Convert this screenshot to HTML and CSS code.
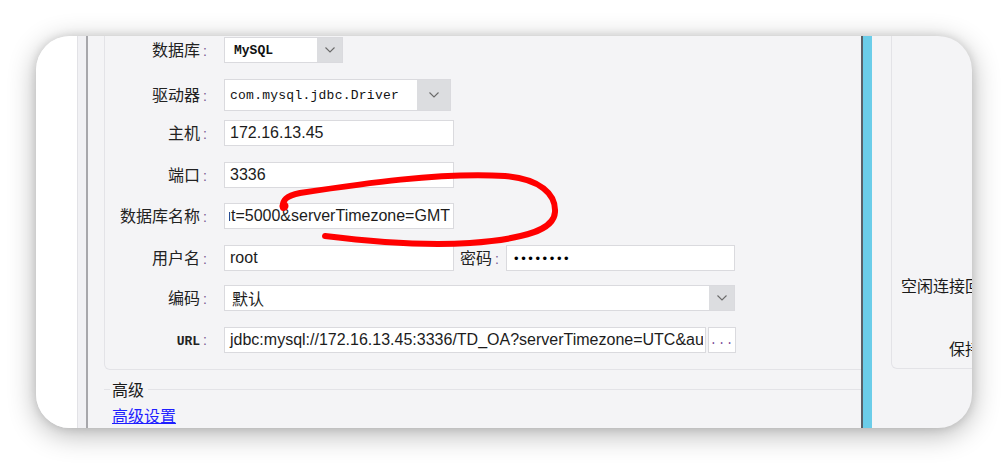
FILE: index.html
```html
<!DOCTYPE html>
<html lang="zh-CN">
<head>
<meta charset="utf-8">
<title>数据连接</title>
<link rel="stylesheet" href="styles.css">
</head>
<body>
<div class="card">
  <div class="nav"></div>
  <div class="rail"></div>
  <div class="main">
    <div class="group">
      <div class="row r1">
        <label class="lbl">数据库<span class="colon">:</span></label>
        <div class="combo w-db"><span class="val mono bold">MySQL</span><span class="btn b26"><svg width="10" height="6" viewBox="0 0 10 6"><polyline points="0.5,0.5 5,5 9.5,0.5" fill="none" stroke="#6b6b6b" stroke-width="1.1"/></svg></span></div>
      </div>
      <div class="row r2">
        <label class="lbl">驱动器<span class="colon">:</span></label>
        <div class="combo w-drv"><span class="val mono drv">com.mysql.jdbc.Driver</span><span class="btn b33"><svg width="10" height="6" viewBox="0 0 10 6"><polyline points="0.5,0.5 5,5 9.5,0.5" fill="none" stroke="#6b6b6b" stroke-width="1.1"/></svg></span></div>
      </div>
      <div class="row r3">
        <label class="lbl">主机<span class="colon">:</span></label>
        <div class="field w-std"><span class="val">172.16.13.45</span></div>
      </div>
      <div class="row r4">
        <label class="lbl">端口<span class="colon">:</span></label>
        <div class="field w-std"><span class="val">3336</span></div>
      </div>
      <div class="row r5">
        <label class="lbl">数据库名称<span class="colon">:</span></label>
        <div class="field w-std"><div class="scroll-end"><span class="val">connectTimeout=5000&amp;serverTimezone=GMT</span></div></div>
      </div>
      <div class="row r6">
        <label class="lbl">用户名<span class="colon">:</span></label>
        <div class="field w-std"><span class="val">root</span></div>
        <label class="lbl2">密码<span class="colon">:</span></label>
        <div class="field w-pwd"><span class="val dots">••••••••</span></div>
      </div>
      <div class="row r7">
        <label class="lbl">编码<span class="colon">:</span></label>
        <div class="combo w-enc"><span class="val cjk">默认</span><span class="btn b26"><svg width="10" height="6" viewBox="0 0 10 6"><polyline points="0.5,0.5 5,5 9.5,0.5" fill="none" stroke="#6b6b6b" stroke-width="1.1"/></svg></span></div>
      </div>
      <div class="row r8">
        <label class="lbl"><span class="mono bold url">URL</span><span class="colon">:</span></label>
        <div class="field w-url"><span class="val clip">jdbc:mysql://172.16.13.45:3336/TD_OA?serverTimezone=UTC&amp;autoReconnect=true</span></div>
        <div class="more">...</div>
      </div>
    </div>
    <div class="adv-head"><span class="line short"></span><span class="adv-title">高级</span><span class="line long"></span></div>
    <a class="adv-link" href="#">高级设置</a>
  </div>
  <div class="splitter"></div>
  <div class="side">
    <div class="group2">
      <div class="s1">空闲连接回收时间</div>
      <div class="s2">保持连接</div>
    </div>
  </div>
</div>
<svg class="mark" width="1008" height="464" viewBox="0 0 1008 464">
  <path d="M283,208 C282,200 286,196 300,193 C360,184 440,172 505,176 C540,179 556,194 555,212 C554,230 525,239 470,243 C420,246 365,241 325,236" fill="none" stroke="#ff0000" stroke-width="6" stroke-linecap="round" stroke-linejoin="round"/>
  <circle cx="284" cy="206" r="4.5" fill="#ff0000"/>
</svg>
</body>
</html>
```
FILE: styles.css
```css
* { box-sizing: border-box; }
html, body { margin: 0; padding: 0; }
body {
  background: #ffffff;
  padding: 36px;
  width: 1008px;
  height: 464px;
  overflow: hidden;
  position: relative;
  font-family: "Noto Sans CJK SC", "Liberation Sans", sans-serif;
  font-size: 16px;
  color: #1e1e1e;
}
.card {
  width: 936px;
  height: 392px;
  border-radius: 34px;
  overflow: hidden;
  display: flex;
  background: #f4f4f6;
  box-shadow: 0 6px 28px rgba(0,0,0,0.30), 0 0 10px rgba(0,0,0,0.12);
}
.nav {
  width: 42px;
  flex: none;
  background: #ffffff;
  border-right: 1px solid #e2e2e6;
}
.rail {
  width: 10px;
  flex: none;
  background: #f1f1f4;
  border-right: 2px solid #a7a7ab;
}
.main {
  width: 773px;
  flex: none;
  padding-left: 16px;
  overflow: hidden;
  display: flex;
  flex-direction: column;
}
.group {
  width: 770px;
  flex: none;
  padding-top: 1px;
  padding-bottom: 16px;
  border: 1px solid #e3e3e7;
  border-top: none;
  border-radius: 0 0 6px 6px;
  display: flex;
  flex-direction: column;
}
.row {
  display: flex;
  align-items: center;
  height: 26px;
}
.r2 { margin-top: 16px; height: 32px; }
.r3 { margin-top: 9px; }
.r4 { margin-top: 16px; }
.r5 { margin-top: 15px; }
.r6 { margin-top: 16px; }
.r7 { margin-top: 14px; }
.r8 { margin-top: 16px; }
.lbl {
  width: 119px;
  flex: none;
  text-align: right;
  padding-right: 17px;
  line-height: 20px;
  color: #222;
  white-space: nowrap;
}
.lbl2 {
  width: 52px;
  flex: none;
  padding-left: 6px;
  line-height: 20px;
  color: #222;
  white-space: nowrap;
}
.colon {
  font-family: "Liberation Sans", sans-serif;
  color: #7a5a92;
  font-size: 14px;
  margin-left: 3px;
}
.field, .combo {
  height: 100%;
  background: #ffffff;
  border: 1px solid #dadade;
  display: flex;
  align-items: center;
  overflow: hidden;
  flex: none;
}
.val {
  font-family: "Liberation Sans", sans-serif;
  font-size: 16px;
  color: #1c1c1c;
  padding-left: 5px;
  white-space: nowrap;
  flex: 1;
  overflow: hidden;
}
.clip { margin-right: 2px; }
.mono { font-family: "Liberation Mono", monospace; font-size: 13px; color: #111; }
.drv { letter-spacing: 0.25px; }
.bold { font-weight: bold; }
.w-db .val { padding-left: 9px; }
.cjk { font-family: "Noto Sans CJK SC", sans-serif; padding-left: 7px; }
.btn {
  height: 100%;
  flex: none;
  background: #dcdde0;
  display: flex;
  align-items: center;
  justify-content: center;
}
.b26 { width: 25px; }
.b33 { width: 33px; }
.w-db { width: 119px; }
.w-drv { width: 227px; }
.w-std { width: 230px; }
.w-pwd { width: 229px; }
.w-enc { width: 511px; }
.w-url { width: 482px; }
.scroll-end {
  flex: 1;
  margin-left: 4px;
  margin-right: 3px;
  overflow: hidden;
  display: flex;
  justify-content: flex-end;
}
.scroll-end .val { flex: none; padding-left: 0; overflow: visible; }
.dots {
  font-size: 13px;
  letter-spacing: 2.6px;
  padding-left: 7px;
  color: #000;
}
.more {
  width: 28px;
  height: 100%;
  margin-left: 2px;
  flex: none;
  background: #fff;
  border: 1px solid #dadade;
  font-family: "Liberation Mono", monospace;
  font-size: 12px;
  color: #7a4c98;
  letter-spacing: 1px;
  display: flex;
  align-items: center;
  justify-content: center;
  padding-top: 2px;
}
.url { font-size: 13px; color: #222; }
.adv-head {
  margin-top: 9px;
  height: 20px;
  display: flex;
  align-items: center;
  width: 780px;
  flex: none;
}
.line { height: 1px; background: #e3e3e7; }
.short { width: 6px; flex: none; }
.long { flex: 1; }
.adv-title {
  padding: 0 4px 0 2px;
  line-height: 20px;
  color: #1a1a1a;
}
.adv-link {
  margin-top: 6px;
  margin-left: 8px;
  line-height: 20px;
  color: #1f1fff;
  text-decoration: underline;
  align-self: flex-start;
}
.splitter {
  width: 11px;
  flex: none;
  background: #6bcde9;
  border-left: 2px solid #5a6168;
}
.side {
  width: 100px;
  flex: none;
  padding-left: 19px;
  overflow: hidden;
}
.group2 {
  width: 120px;
  height: 333px;
  border: 1px solid #e3e3e7;
  border-top: none;
  border-radius: 0 0 6px 6px;
  display: flex;
  flex-direction: column;
}
.s1 {
  margin-top: 239px;
  padding-left: 9px;
  line-height: 20px;
  white-space: nowrap;
  color: #1a1a1a;
}
.s2 {
  margin-top: 43px;
  padding-left: 57px;
  line-height: 20px;
  white-space: nowrap;
  color: #1a1a1a;
}
.mark {
  position: absolute;
  left: 0;
  top: 0;
  pointer-events: none;
}
```
